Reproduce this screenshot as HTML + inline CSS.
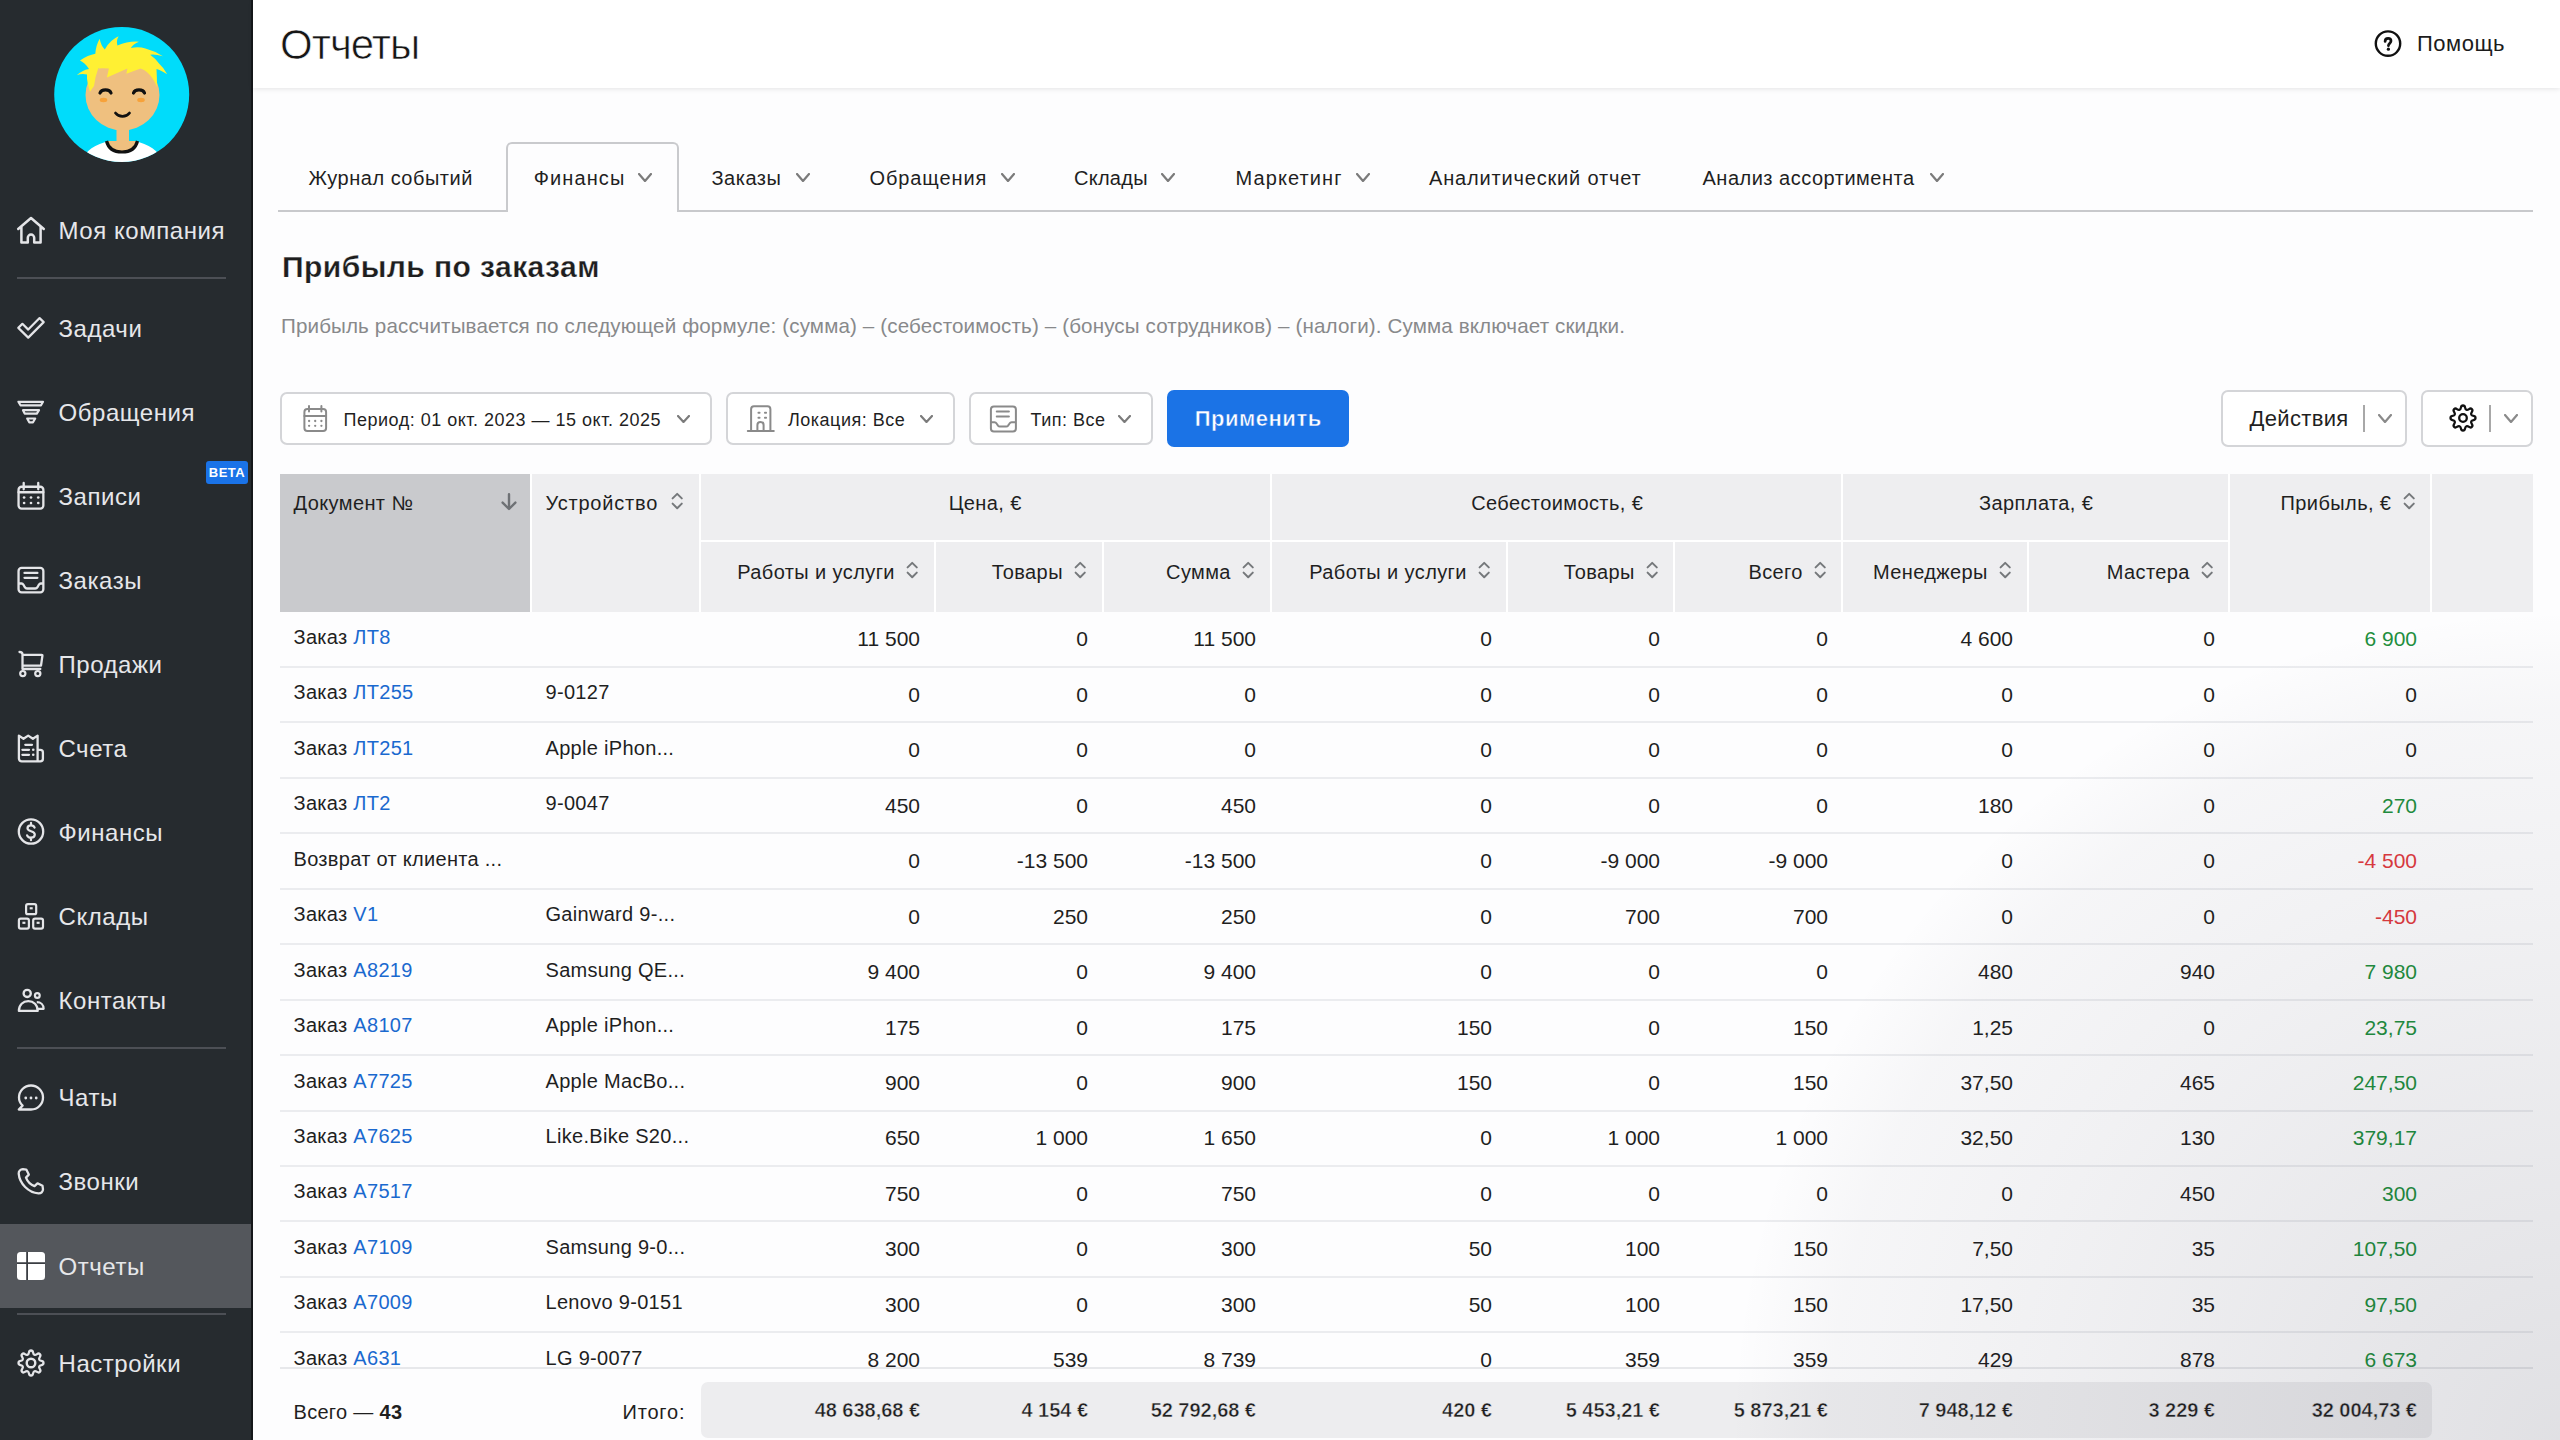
<!DOCTYPE html>
<html><head><meta charset="utf-8"><title>Отчеты</title>
<style>
html,body{margin:0;padding:0;}
body{width:2560px;height:1440px;overflow:hidden;position:relative;background:#fdfdfe;font-family:"Liberation Sans", sans-serif;}
.t{position:absolute;white-space:nowrap;}
#side{position:absolute;left:0;top:0;width:253px;height:1440px;background:#262b2f;border-right:0;}
#side:after{content:"";position:absolute;right:0;top:0;width:2px;height:1440px;background:#15171a;}
#hdr{position:absolute;left:253px;top:0;width:2307px;height:88px;background:#fff;box-shadow:0 1px 5px rgba(0,0,0,0.10);}
#vig{position:absolute;left:253px;top:0;width:2307px;height:1440px;pointer-events:none;background:radial-gradient(circle 830px at 2307px 1440px, rgba(30,30,50,0.13) 0%, rgba(30,30,50,0.055) 65%, rgba(30,30,50,0.03) 88%, rgba(30,30,50,0) 100%);}
</style></head><body>
<div id="side">
<svg style="position:absolute;left:40px;top:15px" width="160" height="160" viewBox="0 0 160 160">
<defs><clipPath id="av"><circle cx="81.7" cy="79.5" r="67.5"/></clipPath></defs>
<circle cx="81.7" cy="79.5" r="67.5" fill="#00dcfb"/>
<g clip-path="url(#av)">
<path d="M38 160 C40 140 50 130 70 126 L94 126 C114 130 124 140 126 160 Z" fill="#ffffff"/>
<rect x="76.5" y="108" width="12.5" height="22" fill="#efc07f"/>
<path d="M66 126 C68 134 74 137.5 82 137.5 C90 137.5 96 134 98 126 Z" fill="#efc07f"/>
<path d="M66.5 126 C68.5 134 74.5 137 82 137 C89.5 137 95.5 134 97.5 126" fill="none" stroke="#111" stroke-width="3.2"/>
<ellipse cx="82.5" cy="80" rx="37" ry="35.5" fill="#efc07f"/>
<path d="M49.9 76.7 C48 70 46.5 64 47 59.5 Q42 58 36.8 60.2 Q42 55 49 53.9 Q45 48 40 45.6 Q48 40 55.3 38.8 Q56 30 59.7 23.75 Q61 31 64.8 34.4 Q70 25 78.6 21.3 Q76 26 77.4 30.6 Q88 26 99 26.7 Q93 29 90.8 33 Q99 31.5 105.4 33.5 Q115 36 122.9 41.25 Q115 39 110.2 39.8 Q116 44 119 48.5 Q124 53 127.2 59.2 Q121 55 116.5 53.9 Q117 63 117 72 Q115 67 112.6 63.6 Q108 56 100.5 53.4 L86.4 58.75 L87.4 53.4 L66.9 62.6 L68.9 53.4 Q62 53 58.2 53.4 Q55 62 54 70.9 Z" fill="#fff033"/>
<path d="M60 78 C61.5 73.8 69.5 73.8 71 78" fill="none" stroke="#111" stroke-width="3.2" stroke-linecap="round"/>
<path d="M93.5 78 C95 73.8 103 73.8 104.5 78" fill="none" stroke="#111" stroke-width="3.2" stroke-linecap="round"/>
<ellipse cx="63.5" cy="85" rx="3.8" ry="2.2" fill="#f7a23a"/>
<ellipse cx="101" cy="85" rx="3.8" ry="2.2" fill="#f7a23a"/>
<path d="M75.5 98 C79 102.5 86 102.5 89.5 98" fill="none" stroke="#111" stroke-width="2.8" stroke-linecap="round"/>
</g>
</svg>
<svg style="position:absolute;left:17px;top:214px;overflow:visible" width="28" height="28" viewBox="0 0 28 28"><path d="M1.2 15 L14 4 L26.8 15 M4.4 12.2 V28.4 H10.8 V23.8 A3.2 3.2 0 0 1 17.2 23.8 V28.4 H23.6 V12.2" fill="none" stroke="#e4e5e8" stroke-width="2.5" stroke-linejoin="round" stroke-linecap="round"/></svg>
<div class="t sb" style="top:218.68px;font-size:24px;line-height:24px;color:#e6e7ea;font-weight:400;letter-spacing:0.55px;left:58.50px;">Моя компания</div>
<svg style="position:absolute;left:17px;top:314px;overflow:visible" width="28" height="28" viewBox="0 0 28 28"><path d="M1.3 13.9 L11.25 23.6 L26.7 8.1 L22.6 4.1 L11.25 15.6 L5.4 9.8 Z" fill="none" stroke="#e4e5e8" stroke-width="2.2" stroke-linejoin="round"/></svg>
<div class="t sb" style="top:316.68px;font-size:24px;line-height:24px;color:#e6e7ea;font-weight:400;letter-spacing:0.55px;left:58.50px;">Задачи</div>
<svg style="position:absolute;left:17px;top:398px;overflow:visible" width="28" height="28" viewBox="0 0 28 28"><path d="M1.4 3.8 H26 L24 7.3 H3.5 Z M6 12.2 H22 L19.8 15.6 H7.7 Z M10.2 20.5 H18.2 L16 24.3 H12.25 Z" fill="none" stroke="#e4e5e8" stroke-width="2.2" stroke-linejoin="round"/></svg>
<div class="t sb" style="top:400.68px;font-size:24px;line-height:24px;color:#e6e7ea;font-weight:400;letter-spacing:0.55px;left:58.50px;">Обращения</div>
<svg style="position:absolute;left:17px;top:482px;overflow:visible" width="28" height="28" viewBox="0 0 28 28"><rect x="1.55" y="4.75" width="24.8" height="21.85" rx="3" fill="none" stroke="#e4e5e8" stroke-width="2.3"/><path d="M1.55 10.25 H26.35 M6.7 1 V7.3 M21.25 1 V7.3" stroke="#e4e5e8" stroke-width="2.3" stroke-linecap="round"/><g fill="#e4e5e8"><circle cx="7.1" cy="15.5" r="1.35"/><circle cx="14" cy="15.5" r="1.35"/><circle cx="21.25" cy="15.5" r="1.35"/><circle cx="7.1" cy="21" r="1.35"/><circle cx="14" cy="21" r="1.35"/><circle cx="21.25" cy="21" r="1.35"/></g></svg>
<div class="t sb" style="top:484.68px;font-size:24px;line-height:24px;color:#e6e7ea;font-weight:400;letter-spacing:0.55px;left:58.50px;">Записи</div>
<svg style="position:absolute;left:17px;top:566px;overflow:visible" width="28" height="28" viewBox="0 0 28 28"><rect x="1.55" y="1.95" width="24.8" height="24.4" rx="3" fill="none" stroke="#e4e5e8" stroke-width="2.3"/><path d="M7.5 6.9 H20.4 M7.5 11.8 H20.4" stroke="#e4e5e8" stroke-width="2.3" stroke-linecap="round"/><path d="M1.55 17.5 H4.6 C5.5 17.5 6 18 6.5 18.8 L7.8 21.2 C8.3 22 8.9 22.5 10 22.5 H18.3 C19.4 22.5 20 22 20.5 21.2 L21.8 18.8 C22.3 18 22.8 17.5 23.7 17.5 H26.35" fill="none" stroke="#e4e5e8" stroke-width="2.3" stroke-linejoin="round"/></svg>
<div class="t sb" style="top:568.68px;font-size:24px;line-height:24px;color:#e6e7ea;font-weight:400;letter-spacing:0.55px;left:58.50px;">Заказы</div>
<svg style="position:absolute;left:17px;top:650px;overflow:visible" width="28" height="28" viewBox="0 0 28 28"><path d="M2.5 2 C4.3 2 5.5 2.8 5.5 4.6 V19 H23.3 M5.5 4.8 H24.6 C25.2 4.8 25.5 5.2 25.4 5.8 L24 15.7 H5.5" fill="none" stroke="#e4e5e8" stroke-width="2.3" stroke-linejoin="round" stroke-linecap="round"/><circle cx="5.8" cy="23.6" r="2.6" fill="none" stroke="#e4e5e8" stroke-width="2.2"/><circle cx="20.8" cy="23.6" r="2.6" fill="none" stroke="#e4e5e8" stroke-width="2.2"/></svg>
<div class="t sb" style="top:652.68px;font-size:24px;line-height:24px;color:#e6e7ea;font-weight:400;letter-spacing:0.55px;left:58.50px;">Продажи</div>
<svg style="position:absolute;left:17px;top:734px;overflow:visible" width="28" height="28" viewBox="0 0 28 28"><path d="M1.9 24.6 V1.6 L6.5 4.8 L11.2 1.6 L15.9 4.8 L20.6 1.6 V27.4 M20.6 15.8 H23.3 C24.8 15.8 25.9 16.9 25.9 18.4 V24.8 C25.9 26.3 24.8 27.4 23.3 27.4 H4.7 C3.2 27.4 1.9 26.2 1.9 24.6" fill="none" stroke="#e4e5e8" stroke-width="2.3" stroke-linejoin="round"/><path d="M8.3 10.8 H15 M5.4 15.8 H12 M5.4 20.8 H12" stroke="#e4e5e8" stroke-width="2.3" stroke-linecap="round"/><circle cx="16.25" cy="15.8" r="1.3" fill="#e4e5e8"/><circle cx="16.25" cy="20.8" r="1.3" fill="#e4e5e8"/></svg>
<div class="t sb" style="top:736.68px;font-size:24px;line-height:24px;color:#e6e7ea;font-weight:400;letter-spacing:0.55px;left:58.50px;">Счета</div>
<svg style="position:absolute;left:17px;top:818px;overflow:visible" width="28" height="28" viewBox="0 0 28 28"><circle cx="14" cy="13.5" r="12.2" fill="none" stroke="#e4e5e8" stroke-width="2.3"/><path d="M17.6 9.6 C17.1 8 15.7 7.3 14 7.3 C12 7.3 10.5 8.4 10.5 10.2 C10.5 14 17.8 12.6 17.8 16.6 C17.8 18.6 16 19.7 14 19.7 C12 19.7 10.6 18.7 10.1 17.3 M14 4.8 V7.3 M14 19.7 V22.2" fill="none" stroke="#e4e5e8" stroke-width="2.2" stroke-linecap="round"/></svg>
<div class="t sb" style="top:820.68px;font-size:24px;line-height:24px;color:#e6e7ea;font-weight:400;letter-spacing:0.55px;left:58.50px;">Финансы</div>
<svg style="position:absolute;left:17px;top:902px;overflow:visible" width="28" height="28" viewBox="0 0 28 28"><rect x="9.1" y="2.1" width="10.1" height="10.1" rx="1.8" fill="none" stroke="#e4e5e8" stroke-width="2.2"/><rect x="1.9" y="16.6" width="10" height="10" rx="1.8" fill="none" stroke="#e4e5e8" stroke-width="2.2"/><rect x="16.2" y="16.6" width="9.8" height="10" rx="1.8" fill="none" stroke="#e4e5e8" stroke-width="2.2"/><rect x="12.7" y="5.2" width="3" height="2.2" fill="#e4e5e8"/><rect x="5.4" y="19.7" width="3" height="2.2" fill="#e4e5e8"/><rect x="19.6" y="19.7" width="3" height="2.2" fill="#e4e5e8"/></svg>
<div class="t sb" style="top:904.68px;font-size:24px;line-height:24px;color:#e6e7ea;font-weight:400;letter-spacing:0.55px;left:58.50px;">Склады</div>
<svg style="position:absolute;left:17px;top:986px;overflow:visible" width="28" height="28" viewBox="0 0 28 28"><circle cx="10.2" cy="7.4" r="3.6" fill="none" stroke="#e4e5e8" stroke-width="2.3"/><circle cx="20.3" cy="9.5" r="2.4" fill="none" stroke="#e4e5e8" stroke-width="2.2"/><path d="M1.9 24.9 C1.9 18.8 6 15.2 11.3 15.2 C16.6 15.2 20.7 18.8 20.7 24.9 Z M19.8 16.2 C23.8 16.2 26.6 18.8 26.6 22.8 H21.2" fill="none" stroke="#e4e5e8" stroke-width="2.3" stroke-linejoin="round"/></svg>
<div class="t sb" style="top:988.68px;font-size:24px;line-height:24px;color:#e6e7ea;font-weight:400;letter-spacing:0.55px;left:58.50px;">Контакты</div>
<svg style="position:absolute;left:17px;top:1083px;overflow:visible" width="28" height="28" viewBox="0 0 28 28"><path d="M14 2.5 C20.6 2.5 26 7.9 26 14.5 C26 21.1 20.6 26.5 14 26.5 H1.8 L5.6 22.6 C3.3 20.4 2 17.6 2 14.5 C2 7.9 7.4 2.5 14 2.5 Z" fill="none" stroke="#e4e5e8" stroke-width="2.3" stroke-linejoin="round"/><circle cx="8.75" cy="15" r="1.4" fill="#e4e5e8"/><circle cx="14" cy="15" r="1.4" fill="#e4e5e8"/><circle cx="19.2" cy="15" r="1.4" fill="#e4e5e8"/></svg>
<div class="t sb" style="top:1085.68px;font-size:24px;line-height:24px;color:#e6e7ea;font-weight:400;letter-spacing:0.55px;left:58.50px;">Чаты</div>
<svg style="position:absolute;left:17px;top:1167px;overflow:visible" width="28" height="28" viewBox="0 0 28 28"><path d="M5.8 2.2 L9.3 2.6 L11.8 7.6 L9 10.6 C10.5 14.6 13.5 17.6 17.5 19.1 L20.5 16.3 L25.5 18.8 L26 22.3 C26 24.6 24 26.6 21.5 26.4 C11.5 25.6 2.5 16.6 1.7 6.6 C1.5 4.1 3.5 2.2 5.8 2.2 Z" fill="none" stroke="#e4e5e8" stroke-width="2.3" stroke-linejoin="round"/></svg>
<div class="t sb" style="top:1169.68px;font-size:24px;line-height:24px;color:#e6e7ea;font-weight:400;letter-spacing:0.55px;left:58.50px;">Звонки</div>
<div style="position:absolute;left:0;top:1224px;width:252px;height:84px;background:#54575c"></div>
<svg style="position:absolute;left:17px;top:1252px;overflow:visible" width="28" height="28" viewBox="0 0 28 28"><rect x="0" y="0" width="28" height="28" rx="3.5" fill="#ffffff"/><path d="M10.1 0 V28 M0 11.1 H28" stroke="#3b3e43" stroke-width="1.8"/></svg>
<div class="t sb" style="top:1254.68px;font-size:24px;line-height:24px;color:#e6e7ea;font-weight:400;letter-spacing:0.55px;left:58.50px;">Отчеты</div>
<svg style="position:absolute;left:17px;top:1349.4px;overflow:visible" width="28" height="28" viewBox="0 0 28 28"><path d="M11.99 3.41 Q12.32 1.51 14.00 1.51 Q15.68 1.51 16.01 3.41 Q16.34 5.31 17.42 5.75 Q18.49 6.20 20.07 5.09 Q21.64 3.98 22.83 5.17 Q24.02 6.36 22.91 7.93 Q21.80 9.51 22.25 10.58 Q22.69 11.66 24.59 11.99 Q26.49 12.32 26.49 14.00 Q26.49 15.68 24.59 16.01 Q22.69 16.34 22.25 17.42 Q21.80 18.49 22.91 20.07 Q24.02 21.64 22.83 22.83 Q21.64 24.02 20.07 22.91 Q18.49 21.80 17.42 22.25 Q16.34 22.69 16.01 24.59 Q15.68 26.49 14.00 26.49 Q12.32 26.49 11.99 24.59 Q11.66 22.69 10.58 22.25 Q9.51 21.80 7.93 22.91 Q6.36 24.02 5.17 22.83 Q3.98 21.64 5.09 20.07 Q6.20 18.49 5.75 17.42 Q5.31 16.34 3.41 16.01 Q1.51 15.68 1.51 14.00 Q1.51 12.32 3.41 11.99 Q5.31 11.66 5.75 10.58 Q6.20 9.51 5.09 7.93 Q3.98 6.36 5.17 5.17 Q6.36 3.98 7.93 5.09 Q9.51 6.20 10.58 5.75 Q11.66 5.31 11.99 3.41 Z" fill="none" stroke="#e4e5e8" stroke-width="2.3" stroke-linejoin="round"/><circle cx="14" cy="14" r="4.3" fill="none" stroke="#e4e5e8" stroke-width="2.4"/></svg>
<div class="t sb" style="top:1351.68px;font-size:24px;line-height:24px;color:#e6e7ea;font-weight:400;letter-spacing:0.55px;left:58.50px;">Настройки</div>
<div style="position:absolute;left:17px;top:277px;width:209px;height:2px;background:#4c4f55"></div>
<div style="position:absolute;left:17px;top:1047px;width:209px;height:2px;background:#4c4f55"></div>
<div style="position:absolute;left:17px;top:1313px;width:209px;height:2px;background:#4c4f55"></div>
<div style="position:absolute;left:206px;top:461px;width:42px;height:23px;background:#1a73e8;border-radius:3px;color:#fff;font-size:13px;font-weight:700;line-height:23px;text-align:center;letter-spacing:0.5px">BETA</div>
</div>
<div id="hdr"></div>
<div class="t thin" style="top:23.65px;font-size:42px;line-height:42px;color:#161616;font-weight:400;letter-spacing:-1.0px;left:280.00px;-webkit-text-stroke:0.7px #fff;">Отчеты</div>
<svg style="position:absolute;left:2374px;top:30px" width="28" height="28" viewBox="0 0 28 28"><circle cx="14" cy="13.6" r="12.2" fill="none" stroke="#111" stroke-width="2.4"/><path d="M11.1 11.4 C11.1 9.6 12.4 8.4 14.1 8.4 C15.8 8.4 17 9.5 17 11.1 C17 13 14.7 13.4 14.4 15.6" fill="none" stroke="#111" stroke-width="2.7" stroke-linecap="round"/><circle cx="14.4" cy="19.2" r="1.6" fill="#111"/></svg>
<div class="t help" style="top:33.38px;font-size:22px;line-height:22px;color:#1c1c1c;font-weight:400;letter-spacing:0.5px;left:2417.00px;">Помощь</div>
<div style="position:absolute;left:278px;top:210px;width:2255px;height:2px;background:#c8c9cc"></div>
<div style="position:absolute;left:506px;top:142px;width:169px;height:68px;border:2px solid #c9cacd;border-bottom:none;border-radius:6px 6px 0 0;background:#fdfdfe"></div>
<div class="t tab" style="top:167.67px;font-size:20px;line-height:20px;color:#1f1f1f;font-weight:400;letter-spacing:0.5px;left:308.60px;">Журнал событий</div>
<div class="t tab" style="top:167.67px;font-size:20px;line-height:20px;color:#1f1f1f;font-weight:400;letter-spacing:1.1px;left:533.70px;">Финансы</div>
<svg style="position:absolute;left:638px;top:173px" width="14" height="9" viewBox="0 0 14 9"><path d="M1 1 L7.0 8 L13 1" fill="none" stroke="#7b7b7b" stroke-width="2.2" stroke-linecap="round" stroke-linejoin="round"/></svg>
<div class="t tab" style="top:167.67px;font-size:20px;line-height:20px;color:#1f1f1f;font-weight:400;letter-spacing:0.5px;left:711.50px;">Заказы</div>
<svg style="position:absolute;left:796px;top:173px" width="14" height="9" viewBox="0 0 14 9"><path d="M1 1 L7.0 8 L13 1" fill="none" stroke="#7b7b7b" stroke-width="2.2" stroke-linecap="round" stroke-linejoin="round"/></svg>
<div class="t tab" style="top:167.67px;font-size:20px;line-height:20px;color:#1f1f1f;font-weight:400;letter-spacing:0.9px;left:869.50px;">Обращения</div>
<svg style="position:absolute;left:1000.5px;top:173px" width="14" height="9" viewBox="0 0 14 9"><path d="M1 1 L7.0 8 L13 1" fill="none" stroke="#7b7b7b" stroke-width="2.2" stroke-linecap="round" stroke-linejoin="round"/></svg>
<div class="t tab" style="top:167.67px;font-size:20px;line-height:20px;color:#1f1f1f;font-weight:400;letter-spacing:0.25px;left:1074.00px;">Склады</div>
<svg style="position:absolute;left:1161px;top:173px" width="14" height="9" viewBox="0 0 14 9"><path d="M1 1 L7.0 8 L13 1" fill="none" stroke="#7b7b7b" stroke-width="2.2" stroke-linecap="round" stroke-linejoin="round"/></svg>
<div class="t tab" style="top:167.67px;font-size:20px;line-height:20px;color:#1f1f1f;font-weight:400;letter-spacing:1.1px;left:1235.50px;">Маркетинг</div>
<svg style="position:absolute;left:1356px;top:173px" width="14" height="9" viewBox="0 0 14 9"><path d="M1 1 L7.0 8 L13 1" fill="none" stroke="#7b7b7b" stroke-width="2.2" stroke-linecap="round" stroke-linejoin="round"/></svg>
<div class="t tab" style="top:167.67px;font-size:20px;line-height:20px;color:#1f1f1f;font-weight:400;letter-spacing:0.83px;left:1429.00px;">Аналитический отчет</div>
<div class="t tab" style="top:167.67px;font-size:20px;line-height:20px;color:#1f1f1f;font-weight:400;letter-spacing:0.5px;left:1702.50px;">Анализ ассортимента</div>
<svg style="position:absolute;left:1929.5px;top:173px" width="14" height="9" viewBox="0 0 14 9"><path d="M1 1 L7.0 8 L13 1" fill="none" stroke="#7b7b7b" stroke-width="2.2" stroke-linecap="round" stroke-linejoin="round"/></svg>
<div class="t h2" style="top:251.60px;font-size:30px;line-height:30px;color:#1e1e1e;font-weight:700;letter-spacing:0.45px;left:282.00px;-webkit-text-stroke:0.25px #fdfdfe;">Прибыль по заказам</div>
<div class="t desc" style="top:315.56px;font-size:20.6px;line-height:20.6px;color:#88898b;font-weight:400;letter-spacing:0.125px;left:281.00px;">Прибыль рассчитывается по следующей формуле: (сумма) – (себестоимость) – (бонусы сотрудников) – (налоги). Сумма включает скидки.</div>
<div style="position:absolute;left:280px;top:392px;width:432px;height:53px;box-sizing:border-box;border:2px solid #d4d5d8;border-radius:7px;background:#fff;"></div>
<svg style="position:absolute;left:303px;top:405px;overflow:visible" width="25" height="27" viewBox="0 0 25 27"><rect x="1.4" y="4" width="21.7" height="21.9" rx="3" fill="none" stroke="#8a8a8a" stroke-width="2"/><path d="M1.4 11.1 H23.1 M6 1 V6.6 M18.4 1 V6.6" stroke="#8a8a8a" stroke-width="2" stroke-linecap="round"/><g fill="#8a8a8a"><circle cx="6.1" cy="16" r="1.15"/><circle cx="12.2" cy="16" r="1.15"/><circle cx="18.4" cy="16" r="1.15"/><circle cx="6.1" cy="20.8" r="1.15"/><circle cx="12.2" cy="20.8" r="1.15"/><circle cx="18.4" cy="20.8" r="1.15"/></g></svg>
<div class="t flt" style="top:410.76px;font-size:18px;line-height:18px;color:#1f1f1f;font-weight:400;letter-spacing:0.5px;left:343.50px;">Период: 01 окт. 2023 — 15 окт. 2025</div>
<svg style="position:absolute;left:677px;top:415px" width="13" height="8" viewBox="0 0 13 8"><path d="M1 1 L6.5 7 L12 1" fill="none" stroke="#7b7b7b" stroke-width="2.2" stroke-linecap="round" stroke-linejoin="round"/></svg>
<div style="position:absolute;left:726px;top:392px;width:229px;height:53px;box-sizing:border-box;border:2px solid #d4d5d8;border-radius:7px;background:#fff;"></div>
<svg style="position:absolute;left:747px;top:405px;overflow:visible" width="27" height="27" viewBox="0 0 27 27"><path d="M4.1 26 V4.2 Q4.1 1.3 7 1.3 H20.5 Q23.4 1.3 23.4 4.2 V26 M0.8 26 H26.8 M10.4 26 V20 A3.1 3.1 0 0 1 16.6 20 V26" fill="none" stroke="#8a8a8a" stroke-width="2" stroke-linejoin="round" stroke-linecap="round"/><g fill="#8a8a8a"><rect x="10.5" y="6.8" width="3" height="2" rx="0.8"/><rect x="17" y="6.8" width="3" height="2" rx="0.8"/><rect x="10.5" y="11.8" width="3" height="2" rx="0.8"/><rect x="17" y="11.8" width="3" height="2" rx="0.8"/></g></svg>
<div class="t flt" style="top:410.76px;font-size:18px;line-height:18px;color:#1f1f1f;font-weight:400;letter-spacing:0.5px;left:788.00px;">Локация: Все</div>
<svg style="position:absolute;left:920px;top:415px" width="13" height="8" viewBox="0 0 13 8"><path d="M1 1 L6.5 7 L12 1" fill="none" stroke="#7b7b7b" stroke-width="2.2" stroke-linecap="round" stroke-linejoin="round"/></svg>
<div style="position:absolute;left:969px;top:392px;width:184px;height:53px;box-sizing:border-box;border:2px solid #d4d5d8;border-radius:7px;background:#fff;"></div>
<svg style="position:absolute;left:989px;top:405px;overflow:visible" width="27" height="27" viewBox="0 0 27 27"><rect x="1.9" y="1.4" width="25" height="25.2" rx="3" fill="none" stroke="#8a8a8a" stroke-width="2"/><path d="M7.75 6.5 H19.9 M7.75 11.5 H19.9" stroke="#8a8a8a" stroke-width="2" stroke-linecap="round"/><path d="M1.9 17.25 H5.5 C6.5 17.25 7.1 17.7 7.6 18.5 L9 20.6 C9.5 21.3 10.2 21.6 11 21.6 H17.2 C18 21.6 18.6 21.3 19.1 20.6 L20.5 18.5 C21 17.7 21.6 17.25 22.6 17.25 H26.9" fill="none" stroke="#8a8a8a" stroke-width="2" stroke-linejoin="round"/></svg>
<div class="t flt" style="top:410.76px;font-size:18px;line-height:18px;color:#1f1f1f;font-weight:400;letter-spacing:0.5px;left:1030.50px;">Тип: Все</div>
<svg style="position:absolute;left:1118px;top:415px" width="13" height="8" viewBox="0 0 13 8"><path d="M1 1 L6.5 7 L12 1" fill="none" stroke="#7b7b7b" stroke-width="2.2" stroke-linecap="round" stroke-linejoin="round"/></svg>
<div style="position:absolute;left:1167px;top:390px;width:182px;height:57px;background:#1b73e6;border-radius:7px"></div>
<div class="t btn" style="top:407.98px;font-size:22px;line-height:22px;color:#fff;font-weight:700;letter-spacing:0.5px;left:658.25px;width:1200px;text-align:center;-webkit-text-stroke:0.5px #1b73e6;">Применить</div>
<div style="position:absolute;left:2221px;top:390px;width:186px;height:57px;box-sizing:border-box;border:2px solid #d4d5d8;border-radius:7px;background:#fff;"></div>
<div class="t act" style="top:408.38px;font-size:22px;line-height:22px;color:#1f1f1f;font-weight:400;letter-spacing:0.33px;left:2249.50px;">Действия</div>
<div style="position:absolute;left:2363px;top:405px;width:2px;height:27px;background:#a8a8a8"></div>
<svg style="position:absolute;left:2378px;top:414px" width="14" height="9" viewBox="0 0 14 9"><path d="M1 1 L7.0 8 L13 1" fill="none" stroke="#8a8a8a" stroke-width="2.2" stroke-linecap="round" stroke-linejoin="round"/></svg>
<div style="position:absolute;left:2421px;top:390px;width:112px;height:57px;box-sizing:border-box;border:2px solid #d4d5d8;border-radius:7px;background:#fff;"></div>
<svg style="position:absolute;left:2448.6px;top:404.3px;overflow:visible" width="28" height="28" viewBox="0 0 28 28"><path d="M11.99 3.41 Q12.32 1.51 14.00 1.51 Q15.68 1.51 16.01 3.41 Q16.34 5.31 17.42 5.75 Q18.49 6.20 20.07 5.09 Q21.64 3.98 22.83 5.17 Q24.02 6.36 22.91 7.93 Q21.80 9.51 22.25 10.58 Q22.69 11.66 24.59 11.99 Q26.49 12.32 26.49 14.00 Q26.49 15.68 24.59 16.01 Q22.69 16.34 22.25 17.42 Q21.80 18.49 22.91 20.07 Q24.02 21.64 22.83 22.83 Q21.64 24.02 20.07 22.91 Q18.49 21.80 17.42 22.25 Q16.34 22.69 16.01 24.59 Q15.68 26.49 14.00 26.49 Q12.32 26.49 11.99 24.59 Q11.66 22.69 10.58 22.25 Q9.51 21.80 7.93 22.91 Q6.36 24.02 5.17 22.83 Q3.98 21.64 5.09 20.07 Q6.20 18.49 5.75 17.42 Q5.31 16.34 3.41 16.01 Q1.51 15.68 1.51 14.00 Q1.51 12.32 3.41 11.99 Q5.31 11.66 5.75 10.58 Q6.20 9.51 5.09 7.93 Q3.98 6.36 5.17 5.17 Q6.36 3.98 7.93 5.09 Q9.51 6.20 10.58 5.75 Q11.66 5.31 11.99 3.41 Z" fill="none" stroke="#111" stroke-width="2.3" stroke-linejoin="round"/><circle cx="14" cy="14" r="3.8" fill="none" stroke="#111" stroke-width="2.3"/></svg>
<div style="position:absolute;left:2489px;top:405px;width:2px;height:27px;background:#a8a8a8"></div>
<svg style="position:absolute;left:2504px;top:414px" width="14" height="9" viewBox="0 0 14 9"><path d="M1 1 L7.0 8 L13 1" fill="none" stroke="#8a8a8a" stroke-width="2.2" stroke-linecap="round" stroke-linejoin="round"/></svg>
<div style="position:absolute;left:280px;top:474px;width:2252.5px;height:137.5px;background:#eeeef0;"></div>
<div style="position:absolute;left:280px;top:474px;width:251px;height:137.5px;background:#c9cacd;"></div>
<div style="position:absolute;left:530px;top:474px;width:2px;height:137.5px;background:#fff;"></div>
<div style="position:absolute;left:698.5px;top:474px;width:2px;height:137.5px;background:#fff;"></div>
<div style="position:absolute;left:934px;top:541px;width:2px;height:70.5px;background:#fff;"></div>
<div style="position:absolute;left:1101.5px;top:541px;width:2px;height:70.5px;background:#fff;"></div>
<div style="position:absolute;left:1270px;top:474px;width:2px;height:137.5px;background:#fff;"></div>
<div style="position:absolute;left:1505.5px;top:541px;width:2px;height:70.5px;background:#fff;"></div>
<div style="position:absolute;left:1673.3px;top:541px;width:2px;height:70.5px;background:#fff;"></div>
<div style="position:absolute;left:1841.4px;top:474px;width:2px;height:137.5px;background:#fff;"></div>
<div style="position:absolute;left:2026.5px;top:541px;width:2px;height:70.5px;background:#fff;"></div>
<div style="position:absolute;left:2228.25px;top:474px;width:2px;height:137.5px;background:#fff;"></div>
<div style="position:absolute;left:2430.25px;top:474px;width:2px;height:137.5px;background:#fff;"></div>
<div style="position:absolute;left:699.5px;top:540px;width:571.5px;height:2px;background:#fff;"></div>
<div style="position:absolute;left:1271px;top:540px;width:571.4000000000001px;height:2px;background:#fff;"></div>
<div style="position:absolute;left:1842.4px;top:540px;width:386.8499999999999px;height:2px;background:#fff;"></div>
<div class="t th" style="top:492.57px;font-size:20px;line-height:20px;color:#1f1f1f;font-weight:400;letter-spacing:0.4px;left:293.50px;">Документ №</div>
<svg style="position:absolute;left:500.5px;top:492.5px;overflow:visible" width="17" height="20" viewBox="0 0 17 20"><path d="M8 1.2 V15.6 M1.6 9.6 L8 16 L14.4 9.6" fill="none" stroke="#6e7175" stroke-width="2.4" stroke-linecap="round" stroke-linejoin="round"/></svg>
<div class="t th" style="top:492.57px;font-size:20px;line-height:20px;color:#1f1f1f;font-weight:400;letter-spacing:0.8px;left:545.50px;">Устройство</div>
<svg style="position:absolute;left:670.5px;top:493px;overflow:visible" width="12" height="17" viewBox="0 0 12 17"><path d="M1.6 5.4 L6.2 0.9 L10.8 5.4 M1.6 10.6 L6.2 15.2 L10.8 10.6" fill="none" stroke="#75787b" stroke-width="2" stroke-linecap="round" stroke-linejoin="round"/></svg>
<div class="t th" style="top:492.57px;font-size:20px;line-height:20px;color:#1f1f1f;font-weight:400;letter-spacing:0.4px;left:385.20px;width:1200px;text-align:center;">Цена, €</div>
<div class="t th" style="top:492.57px;font-size:20px;line-height:20px;color:#1f1f1f;font-weight:400;letter-spacing:0.4px;left:957.20px;width:1200px;text-align:center;">Себестоимость, €</div>
<div class="t th" style="top:492.57px;font-size:20px;line-height:20px;color:#1f1f1f;font-weight:400;letter-spacing:0.4px;left:1436.20px;width:1200px;text-align:center;">Зарплата, €</div>
<div class="t th" style="top:492.57px;font-size:20px;line-height:20px;color:#1f1f1f;font-weight:400;letter-spacing:0.4px;left:1191.40px;width:1200px;text-align:right;">Прибыль, €</div>
<svg style="position:absolute;left:2402.5px;top:492.8px;overflow:visible" width="12" height="17" viewBox="0 0 12 17"><path d="M1.6 5.4 L6.2 0.9 L10.8 5.4 M1.6 10.6 L6.2 15.2 L10.8 10.6" fill="none" stroke="#75787b" stroke-width="2" stroke-linecap="round" stroke-linejoin="round"/></svg>
<div class="t th" style="top:561.77px;font-size:20px;line-height:20px;color:#1f1f1f;font-weight:400;letter-spacing:0.4px;left:-305.10px;width:1200px;text-align:right;">Работы и услуги</div>
<svg style="position:absolute;left:906px;top:562px;overflow:visible" width="12" height="17" viewBox="0 0 12 17"><path d="M1.6 5.4 L6.2 0.9 L10.8 5.4 M1.6 10.6 L6.2 15.2 L10.8 10.6" fill="none" stroke="#75787b" stroke-width="2" stroke-linecap="round" stroke-linejoin="round"/></svg>
<div class="t th" style="top:561.77px;font-size:20px;line-height:20px;color:#1f1f1f;font-weight:400;letter-spacing:0.4px;left:-137.10px;width:1200px;text-align:right;">Товары</div>
<svg style="position:absolute;left:1074px;top:562px;overflow:visible" width="12" height="17" viewBox="0 0 12 17"><path d="M1.6 5.4 L6.2 0.9 L10.8 5.4 M1.6 10.6 L6.2 15.2 L10.8 10.6" fill="none" stroke="#75787b" stroke-width="2" stroke-linecap="round" stroke-linejoin="round"/></svg>
<div class="t th" style="top:561.77px;font-size:20px;line-height:20px;color:#1f1f1f;font-weight:400;letter-spacing:0.4px;left:30.90px;width:1200px;text-align:right;">Сумма</div>
<svg style="position:absolute;left:1242px;top:562px;overflow:visible" width="12" height="17" viewBox="0 0 12 17"><path d="M1.6 5.4 L6.2 0.9 L10.8 5.4 M1.6 10.6 L6.2 15.2 L10.8 10.6" fill="none" stroke="#75787b" stroke-width="2" stroke-linecap="round" stroke-linejoin="round"/></svg>
<div class="t th" style="top:561.77px;font-size:20px;line-height:20px;color:#1f1f1f;font-weight:400;letter-spacing:0.4px;left:266.90px;width:1200px;text-align:right;">Работы и услуги</div>
<svg style="position:absolute;left:1478px;top:562px;overflow:visible" width="12" height="17" viewBox="0 0 12 17"><path d="M1.6 5.4 L6.2 0.9 L10.8 5.4 M1.6 10.6 L6.2 15.2 L10.8 10.6" fill="none" stroke="#75787b" stroke-width="2" stroke-linecap="round" stroke-linejoin="round"/></svg>
<div class="t th" style="top:561.77px;font-size:20px;line-height:20px;color:#1f1f1f;font-weight:400;letter-spacing:0.4px;left:434.90px;width:1200px;text-align:right;">Товары</div>
<svg style="position:absolute;left:1646px;top:562px;overflow:visible" width="12" height="17" viewBox="0 0 12 17"><path d="M1.6 5.4 L6.2 0.9 L10.8 5.4 M1.6 10.6 L6.2 15.2 L10.8 10.6" fill="none" stroke="#75787b" stroke-width="2" stroke-linecap="round" stroke-linejoin="round"/></svg>
<div class="t th" style="top:561.77px;font-size:20px;line-height:20px;color:#1f1f1f;font-weight:400;letter-spacing:0.4px;left:602.90px;width:1200px;text-align:right;">Всего</div>
<svg style="position:absolute;left:1814px;top:562px;overflow:visible" width="12" height="17" viewBox="0 0 12 17"><path d="M1.6 5.4 L6.2 0.9 L10.8 5.4 M1.6 10.6 L6.2 15.2 L10.8 10.6" fill="none" stroke="#75787b" stroke-width="2" stroke-linecap="round" stroke-linejoin="round"/></svg>
<div class="t th" style="top:561.77px;font-size:20px;line-height:20px;color:#1f1f1f;font-weight:400;letter-spacing:0.4px;left:787.90px;width:1200px;text-align:right;">Менеджеры</div>
<svg style="position:absolute;left:1999px;top:562px;overflow:visible" width="12" height="17" viewBox="0 0 12 17"><path d="M1.6 5.4 L6.2 0.9 L10.8 5.4 M1.6 10.6 L6.2 15.2 L10.8 10.6" fill="none" stroke="#75787b" stroke-width="2" stroke-linecap="round" stroke-linejoin="round"/></svg>
<div class="t th" style="top:561.77px;font-size:20px;line-height:20px;color:#1f1f1f;font-weight:400;letter-spacing:0.4px;left:989.90px;width:1200px;text-align:right;">Мастера</div>
<svg style="position:absolute;left:2201px;top:562px;overflow:visible" width="12" height="17" viewBox="0 0 12 17"><path d="M1.6 5.4 L6.2 0.9 L10.8 5.4 M1.6 10.6 L6.2 15.2 L10.8 10.6" fill="none" stroke="#75787b" stroke-width="2" stroke-linecap="round" stroke-linejoin="round"/></svg>
<div class="t td" style="top:626.97px;font-size:20px;line-height:20px;color:#1f1f1f;font-weight:400;letter-spacing:0.3px;left:293.50px;">Заказ <span style="color:#1a69cf">ЛТ8</span></div>
<div class="t num" style="top:628.42px;font-size:21px;line-height:21px;color:#1f1f1f;font-weight:400;left:-280.00px;width:1200px;text-align:right;">11 500</div>
<div class="t num" style="top:628.42px;font-size:21px;line-height:21px;color:#1f1f1f;font-weight:400;left:-112.00px;width:1200px;text-align:right;">0</div>
<div class="t num" style="top:628.42px;font-size:21px;line-height:21px;color:#1f1f1f;font-weight:400;left:56.00px;width:1200px;text-align:right;">11 500</div>
<div class="t num" style="top:628.42px;font-size:21px;line-height:21px;color:#1f1f1f;font-weight:400;left:292.00px;width:1200px;text-align:right;">0</div>
<div class="t num" style="top:628.42px;font-size:21px;line-height:21px;color:#1f1f1f;font-weight:400;left:460.00px;width:1200px;text-align:right;">0</div>
<div class="t num" style="top:628.42px;font-size:21px;line-height:21px;color:#1f1f1f;font-weight:400;left:628.00px;width:1200px;text-align:right;">0</div>
<div class="t num" style="top:628.42px;font-size:21px;line-height:21px;color:#1f1f1f;font-weight:400;left:813.00px;width:1200px;text-align:right;">4 600</div>
<div class="t num" style="top:628.42px;font-size:21px;line-height:21px;color:#1f1f1f;font-weight:400;left:1015.00px;width:1200px;text-align:right;">0</div>
<div class="t num" style="top:628.42px;font-size:21px;line-height:21px;color:#1f8f3e;font-weight:400;left:1217.00px;width:1200px;text-align:right;">6 900</div>
<div style="position:absolute;left:280px;top:665.95px;width:2252.5px;height:2px;background:#ebecef;"></div>
<div class="t td" style="top:682.42px;font-size:20px;line-height:20px;color:#1f1f1f;font-weight:400;letter-spacing:0.3px;left:293.50px;">Заказ <span style="color:#1a69cf">ЛТ255</span></div>
<div class="t td" style="top:682.42px;font-size:20px;line-height:20px;color:#1f1f1f;font-weight:400;letter-spacing:0.3px;left:545.50px;">9-0127</div>
<div class="t num" style="top:683.87px;font-size:21px;line-height:21px;color:#1f1f1f;font-weight:400;left:-280.00px;width:1200px;text-align:right;">0</div>
<div class="t num" style="top:683.87px;font-size:21px;line-height:21px;color:#1f1f1f;font-weight:400;left:-112.00px;width:1200px;text-align:right;">0</div>
<div class="t num" style="top:683.87px;font-size:21px;line-height:21px;color:#1f1f1f;font-weight:400;left:56.00px;width:1200px;text-align:right;">0</div>
<div class="t num" style="top:683.87px;font-size:21px;line-height:21px;color:#1f1f1f;font-weight:400;left:292.00px;width:1200px;text-align:right;">0</div>
<div class="t num" style="top:683.87px;font-size:21px;line-height:21px;color:#1f1f1f;font-weight:400;left:460.00px;width:1200px;text-align:right;">0</div>
<div class="t num" style="top:683.87px;font-size:21px;line-height:21px;color:#1f1f1f;font-weight:400;left:628.00px;width:1200px;text-align:right;">0</div>
<div class="t num" style="top:683.87px;font-size:21px;line-height:21px;color:#1f1f1f;font-weight:400;left:813.00px;width:1200px;text-align:right;">0</div>
<div class="t num" style="top:683.87px;font-size:21px;line-height:21px;color:#1f1f1f;font-weight:400;left:1015.00px;width:1200px;text-align:right;">0</div>
<div class="t num" style="top:683.87px;font-size:21px;line-height:21px;color:#1f1f1f;font-weight:400;left:1217.00px;width:1200px;text-align:right;">0</div>
<div style="position:absolute;left:280px;top:721.4px;width:2252.5px;height:2px;background:#ebecef;"></div>
<div class="t td" style="top:737.87px;font-size:20px;line-height:20px;color:#1f1f1f;font-weight:400;letter-spacing:0.3px;left:293.50px;">Заказ <span style="color:#1a69cf">ЛТ251</span></div>
<div class="t td" style="top:737.87px;font-size:20px;line-height:20px;color:#1f1f1f;font-weight:400;letter-spacing:0.3px;left:545.50px;">Apple iPhon...</div>
<div class="t num" style="top:739.32px;font-size:21px;line-height:21px;color:#1f1f1f;font-weight:400;left:-280.00px;width:1200px;text-align:right;">0</div>
<div class="t num" style="top:739.32px;font-size:21px;line-height:21px;color:#1f1f1f;font-weight:400;left:-112.00px;width:1200px;text-align:right;">0</div>
<div class="t num" style="top:739.32px;font-size:21px;line-height:21px;color:#1f1f1f;font-weight:400;left:56.00px;width:1200px;text-align:right;">0</div>
<div class="t num" style="top:739.32px;font-size:21px;line-height:21px;color:#1f1f1f;font-weight:400;left:292.00px;width:1200px;text-align:right;">0</div>
<div class="t num" style="top:739.32px;font-size:21px;line-height:21px;color:#1f1f1f;font-weight:400;left:460.00px;width:1200px;text-align:right;">0</div>
<div class="t num" style="top:739.32px;font-size:21px;line-height:21px;color:#1f1f1f;font-weight:400;left:628.00px;width:1200px;text-align:right;">0</div>
<div class="t num" style="top:739.32px;font-size:21px;line-height:21px;color:#1f1f1f;font-weight:400;left:813.00px;width:1200px;text-align:right;">0</div>
<div class="t num" style="top:739.32px;font-size:21px;line-height:21px;color:#1f1f1f;font-weight:400;left:1015.00px;width:1200px;text-align:right;">0</div>
<div class="t num" style="top:739.32px;font-size:21px;line-height:21px;color:#1f1f1f;font-weight:400;left:1217.00px;width:1200px;text-align:right;">0</div>
<div style="position:absolute;left:280px;top:776.85px;width:2252.5px;height:2px;background:#ebecef;"></div>
<div class="t td" style="top:793.32px;font-size:20px;line-height:20px;color:#1f1f1f;font-weight:400;letter-spacing:0.3px;left:293.50px;">Заказ <span style="color:#1a69cf">ЛТ2</span></div>
<div class="t td" style="top:793.32px;font-size:20px;line-height:20px;color:#1f1f1f;font-weight:400;letter-spacing:0.3px;left:545.50px;">9-0047</div>
<div class="t num" style="top:794.77px;font-size:21px;line-height:21px;color:#1f1f1f;font-weight:400;left:-280.00px;width:1200px;text-align:right;">450</div>
<div class="t num" style="top:794.77px;font-size:21px;line-height:21px;color:#1f1f1f;font-weight:400;left:-112.00px;width:1200px;text-align:right;">0</div>
<div class="t num" style="top:794.77px;font-size:21px;line-height:21px;color:#1f1f1f;font-weight:400;left:56.00px;width:1200px;text-align:right;">450</div>
<div class="t num" style="top:794.77px;font-size:21px;line-height:21px;color:#1f1f1f;font-weight:400;left:292.00px;width:1200px;text-align:right;">0</div>
<div class="t num" style="top:794.77px;font-size:21px;line-height:21px;color:#1f1f1f;font-weight:400;left:460.00px;width:1200px;text-align:right;">0</div>
<div class="t num" style="top:794.77px;font-size:21px;line-height:21px;color:#1f1f1f;font-weight:400;left:628.00px;width:1200px;text-align:right;">0</div>
<div class="t num" style="top:794.77px;font-size:21px;line-height:21px;color:#1f1f1f;font-weight:400;left:813.00px;width:1200px;text-align:right;">180</div>
<div class="t num" style="top:794.77px;font-size:21px;line-height:21px;color:#1f1f1f;font-weight:400;left:1015.00px;width:1200px;text-align:right;">0</div>
<div class="t num" style="top:794.77px;font-size:21px;line-height:21px;color:#1f8f3e;font-weight:400;left:1217.00px;width:1200px;text-align:right;">270</div>
<div style="position:absolute;left:280px;top:832.3px;width:2252.5px;height:2px;background:#ebecef;"></div>
<div class="t td" style="top:848.77px;font-size:20px;line-height:20px;color:#1f1f1f;font-weight:400;letter-spacing:0.3px;left:293.50px;">Возврат от клиента ...</div>
<div class="t num" style="top:850.22px;font-size:21px;line-height:21px;color:#1f1f1f;font-weight:400;left:-280.00px;width:1200px;text-align:right;">0</div>
<div class="t num" style="top:850.22px;font-size:21px;line-height:21px;color:#1f1f1f;font-weight:400;left:-112.00px;width:1200px;text-align:right;">-13 500</div>
<div class="t num" style="top:850.22px;font-size:21px;line-height:21px;color:#1f1f1f;font-weight:400;left:56.00px;width:1200px;text-align:right;">-13 500</div>
<div class="t num" style="top:850.22px;font-size:21px;line-height:21px;color:#1f1f1f;font-weight:400;left:292.00px;width:1200px;text-align:right;">0</div>
<div class="t num" style="top:850.22px;font-size:21px;line-height:21px;color:#1f1f1f;font-weight:400;left:460.00px;width:1200px;text-align:right;">-9 000</div>
<div class="t num" style="top:850.22px;font-size:21px;line-height:21px;color:#1f1f1f;font-weight:400;left:628.00px;width:1200px;text-align:right;">-9 000</div>
<div class="t num" style="top:850.22px;font-size:21px;line-height:21px;color:#1f1f1f;font-weight:400;left:813.00px;width:1200px;text-align:right;">0</div>
<div class="t num" style="top:850.22px;font-size:21px;line-height:21px;color:#1f1f1f;font-weight:400;left:1015.00px;width:1200px;text-align:right;">0</div>
<div class="t num" style="top:850.22px;font-size:21px;line-height:21px;color:#e03a3e;font-weight:400;left:1217.00px;width:1200px;text-align:right;">-4 500</div>
<div style="position:absolute;left:280px;top:887.75px;width:2252.5px;height:2px;background:#ebecef;"></div>
<div class="t td" style="top:904.22px;font-size:20px;line-height:20px;color:#1f1f1f;font-weight:400;letter-spacing:0.3px;left:293.50px;">Заказ <span style="color:#1a69cf">V1</span></div>
<div class="t td" style="top:904.22px;font-size:20px;line-height:20px;color:#1f1f1f;font-weight:400;letter-spacing:0.3px;left:545.50px;">Gainward 9-...</div>
<div class="t num" style="top:905.67px;font-size:21px;line-height:21px;color:#1f1f1f;font-weight:400;left:-280.00px;width:1200px;text-align:right;">0</div>
<div class="t num" style="top:905.67px;font-size:21px;line-height:21px;color:#1f1f1f;font-weight:400;left:-112.00px;width:1200px;text-align:right;">250</div>
<div class="t num" style="top:905.67px;font-size:21px;line-height:21px;color:#1f1f1f;font-weight:400;left:56.00px;width:1200px;text-align:right;">250</div>
<div class="t num" style="top:905.67px;font-size:21px;line-height:21px;color:#1f1f1f;font-weight:400;left:292.00px;width:1200px;text-align:right;">0</div>
<div class="t num" style="top:905.67px;font-size:21px;line-height:21px;color:#1f1f1f;font-weight:400;left:460.00px;width:1200px;text-align:right;">700</div>
<div class="t num" style="top:905.67px;font-size:21px;line-height:21px;color:#1f1f1f;font-weight:400;left:628.00px;width:1200px;text-align:right;">700</div>
<div class="t num" style="top:905.67px;font-size:21px;line-height:21px;color:#1f1f1f;font-weight:400;left:813.00px;width:1200px;text-align:right;">0</div>
<div class="t num" style="top:905.67px;font-size:21px;line-height:21px;color:#1f1f1f;font-weight:400;left:1015.00px;width:1200px;text-align:right;">0</div>
<div class="t num" style="top:905.67px;font-size:21px;line-height:21px;color:#e03a3e;font-weight:400;left:1217.00px;width:1200px;text-align:right;">-450</div>
<div style="position:absolute;left:280px;top:943.2px;width:2252.5px;height:2px;background:#ebecef;"></div>
<div class="t td" style="top:959.67px;font-size:20px;line-height:20px;color:#1f1f1f;font-weight:400;letter-spacing:0.3px;left:293.50px;">Заказ <span style="color:#1a69cf">A8219</span></div>
<div class="t td" style="top:959.67px;font-size:20px;line-height:20px;color:#1f1f1f;font-weight:400;letter-spacing:0.3px;left:545.50px;">Samsung QE...</div>
<div class="t num" style="top:961.12px;font-size:21px;line-height:21px;color:#1f1f1f;font-weight:400;left:-280.00px;width:1200px;text-align:right;">9 400</div>
<div class="t num" style="top:961.12px;font-size:21px;line-height:21px;color:#1f1f1f;font-weight:400;left:-112.00px;width:1200px;text-align:right;">0</div>
<div class="t num" style="top:961.12px;font-size:21px;line-height:21px;color:#1f1f1f;font-weight:400;left:56.00px;width:1200px;text-align:right;">9 400</div>
<div class="t num" style="top:961.12px;font-size:21px;line-height:21px;color:#1f1f1f;font-weight:400;left:292.00px;width:1200px;text-align:right;">0</div>
<div class="t num" style="top:961.12px;font-size:21px;line-height:21px;color:#1f1f1f;font-weight:400;left:460.00px;width:1200px;text-align:right;">0</div>
<div class="t num" style="top:961.12px;font-size:21px;line-height:21px;color:#1f1f1f;font-weight:400;left:628.00px;width:1200px;text-align:right;">0</div>
<div class="t num" style="top:961.12px;font-size:21px;line-height:21px;color:#1f1f1f;font-weight:400;left:813.00px;width:1200px;text-align:right;">480</div>
<div class="t num" style="top:961.12px;font-size:21px;line-height:21px;color:#1f1f1f;font-weight:400;left:1015.00px;width:1200px;text-align:right;">940</div>
<div class="t num" style="top:961.12px;font-size:21px;line-height:21px;color:#1f8f3e;font-weight:400;left:1217.00px;width:1200px;text-align:right;">7 980</div>
<div style="position:absolute;left:280px;top:998.6500000000001px;width:2252.5px;height:2px;background:#ebecef;"></div>
<div class="t td" style="top:1015.12px;font-size:20px;line-height:20px;color:#1f1f1f;font-weight:400;letter-spacing:0.3px;left:293.50px;">Заказ <span style="color:#1a69cf">A8107</span></div>
<div class="t td" style="top:1015.12px;font-size:20px;line-height:20px;color:#1f1f1f;font-weight:400;letter-spacing:0.3px;left:545.50px;">Apple iPhon...</div>
<div class="t num" style="top:1016.57px;font-size:21px;line-height:21px;color:#1f1f1f;font-weight:400;left:-280.00px;width:1200px;text-align:right;">175</div>
<div class="t num" style="top:1016.57px;font-size:21px;line-height:21px;color:#1f1f1f;font-weight:400;left:-112.00px;width:1200px;text-align:right;">0</div>
<div class="t num" style="top:1016.57px;font-size:21px;line-height:21px;color:#1f1f1f;font-weight:400;left:56.00px;width:1200px;text-align:right;">175</div>
<div class="t num" style="top:1016.57px;font-size:21px;line-height:21px;color:#1f1f1f;font-weight:400;left:292.00px;width:1200px;text-align:right;">150</div>
<div class="t num" style="top:1016.57px;font-size:21px;line-height:21px;color:#1f1f1f;font-weight:400;left:460.00px;width:1200px;text-align:right;">0</div>
<div class="t num" style="top:1016.57px;font-size:21px;line-height:21px;color:#1f1f1f;font-weight:400;left:628.00px;width:1200px;text-align:right;">150</div>
<div class="t num" style="top:1016.57px;font-size:21px;line-height:21px;color:#1f1f1f;font-weight:400;left:813.00px;width:1200px;text-align:right;">1,25</div>
<div class="t num" style="top:1016.57px;font-size:21px;line-height:21px;color:#1f1f1f;font-weight:400;left:1015.00px;width:1200px;text-align:right;">0</div>
<div class="t num" style="top:1016.57px;font-size:21px;line-height:21px;color:#1f8f3e;font-weight:400;left:1217.00px;width:1200px;text-align:right;">23,75</div>
<div style="position:absolute;left:280px;top:1054.1px;width:2252.5px;height:2px;background:#ebecef;"></div>
<div class="t td" style="top:1070.57px;font-size:20px;line-height:20px;color:#1f1f1f;font-weight:400;letter-spacing:0.3px;left:293.50px;">Заказ <span style="color:#1a69cf">A7725</span></div>
<div class="t td" style="top:1070.57px;font-size:20px;line-height:20px;color:#1f1f1f;font-weight:400;letter-spacing:0.3px;left:545.50px;">Apple MacBo...</div>
<div class="t num" style="top:1072.02px;font-size:21px;line-height:21px;color:#1f1f1f;font-weight:400;left:-280.00px;width:1200px;text-align:right;">900</div>
<div class="t num" style="top:1072.02px;font-size:21px;line-height:21px;color:#1f1f1f;font-weight:400;left:-112.00px;width:1200px;text-align:right;">0</div>
<div class="t num" style="top:1072.02px;font-size:21px;line-height:21px;color:#1f1f1f;font-weight:400;left:56.00px;width:1200px;text-align:right;">900</div>
<div class="t num" style="top:1072.02px;font-size:21px;line-height:21px;color:#1f1f1f;font-weight:400;left:292.00px;width:1200px;text-align:right;">150</div>
<div class="t num" style="top:1072.02px;font-size:21px;line-height:21px;color:#1f1f1f;font-weight:400;left:460.00px;width:1200px;text-align:right;">0</div>
<div class="t num" style="top:1072.02px;font-size:21px;line-height:21px;color:#1f1f1f;font-weight:400;left:628.00px;width:1200px;text-align:right;">150</div>
<div class="t num" style="top:1072.02px;font-size:21px;line-height:21px;color:#1f1f1f;font-weight:400;left:813.00px;width:1200px;text-align:right;">37,50</div>
<div class="t num" style="top:1072.02px;font-size:21px;line-height:21px;color:#1f1f1f;font-weight:400;left:1015.00px;width:1200px;text-align:right;">465</div>
<div class="t num" style="top:1072.02px;font-size:21px;line-height:21px;color:#1f8f3e;font-weight:400;left:1217.00px;width:1200px;text-align:right;">247,50</div>
<div style="position:absolute;left:280px;top:1109.55px;width:2252.5px;height:2px;background:#ebecef;"></div>
<div class="t td" style="top:1126.02px;font-size:20px;line-height:20px;color:#1f1f1f;font-weight:400;letter-spacing:0.3px;left:293.50px;">Заказ <span style="color:#1a69cf">A7625</span></div>
<div class="t td" style="top:1126.02px;font-size:20px;line-height:20px;color:#1f1f1f;font-weight:400;letter-spacing:0.3px;left:545.50px;">Like.Bike S20...</div>
<div class="t num" style="top:1127.47px;font-size:21px;line-height:21px;color:#1f1f1f;font-weight:400;left:-280.00px;width:1200px;text-align:right;">650</div>
<div class="t num" style="top:1127.47px;font-size:21px;line-height:21px;color:#1f1f1f;font-weight:400;left:-112.00px;width:1200px;text-align:right;">1 000</div>
<div class="t num" style="top:1127.47px;font-size:21px;line-height:21px;color:#1f1f1f;font-weight:400;left:56.00px;width:1200px;text-align:right;">1 650</div>
<div class="t num" style="top:1127.47px;font-size:21px;line-height:21px;color:#1f1f1f;font-weight:400;left:292.00px;width:1200px;text-align:right;">0</div>
<div class="t num" style="top:1127.47px;font-size:21px;line-height:21px;color:#1f1f1f;font-weight:400;left:460.00px;width:1200px;text-align:right;">1 000</div>
<div class="t num" style="top:1127.47px;font-size:21px;line-height:21px;color:#1f1f1f;font-weight:400;left:628.00px;width:1200px;text-align:right;">1 000</div>
<div class="t num" style="top:1127.47px;font-size:21px;line-height:21px;color:#1f1f1f;font-weight:400;left:813.00px;width:1200px;text-align:right;">32,50</div>
<div class="t num" style="top:1127.47px;font-size:21px;line-height:21px;color:#1f1f1f;font-weight:400;left:1015.00px;width:1200px;text-align:right;">130</div>
<div class="t num" style="top:1127.47px;font-size:21px;line-height:21px;color:#1f8f3e;font-weight:400;left:1217.00px;width:1200px;text-align:right;">379,17</div>
<div style="position:absolute;left:280px;top:1165.0px;width:2252.5px;height:2px;background:#ebecef;"></div>
<div class="t td" style="top:1181.47px;font-size:20px;line-height:20px;color:#1f1f1f;font-weight:400;letter-spacing:0.3px;left:293.50px;">Заказ <span style="color:#1a69cf">A7517</span></div>
<div class="t num" style="top:1182.92px;font-size:21px;line-height:21px;color:#1f1f1f;font-weight:400;left:-280.00px;width:1200px;text-align:right;">750</div>
<div class="t num" style="top:1182.92px;font-size:21px;line-height:21px;color:#1f1f1f;font-weight:400;left:-112.00px;width:1200px;text-align:right;">0</div>
<div class="t num" style="top:1182.92px;font-size:21px;line-height:21px;color:#1f1f1f;font-weight:400;left:56.00px;width:1200px;text-align:right;">750</div>
<div class="t num" style="top:1182.92px;font-size:21px;line-height:21px;color:#1f1f1f;font-weight:400;left:292.00px;width:1200px;text-align:right;">0</div>
<div class="t num" style="top:1182.92px;font-size:21px;line-height:21px;color:#1f1f1f;font-weight:400;left:460.00px;width:1200px;text-align:right;">0</div>
<div class="t num" style="top:1182.92px;font-size:21px;line-height:21px;color:#1f1f1f;font-weight:400;left:628.00px;width:1200px;text-align:right;">0</div>
<div class="t num" style="top:1182.92px;font-size:21px;line-height:21px;color:#1f1f1f;font-weight:400;left:813.00px;width:1200px;text-align:right;">0</div>
<div class="t num" style="top:1182.92px;font-size:21px;line-height:21px;color:#1f1f1f;font-weight:400;left:1015.00px;width:1200px;text-align:right;">450</div>
<div class="t num" style="top:1182.92px;font-size:21px;line-height:21px;color:#1f8f3e;font-weight:400;left:1217.00px;width:1200px;text-align:right;">300</div>
<div style="position:absolute;left:280px;top:1220.45px;width:2252.5px;height:2px;background:#ebecef;"></div>
<div class="t td" style="top:1236.92px;font-size:20px;line-height:20px;color:#1f1f1f;font-weight:400;letter-spacing:0.3px;left:293.50px;">Заказ <span style="color:#1a69cf">A7109</span></div>
<div class="t td" style="top:1236.92px;font-size:20px;line-height:20px;color:#1f1f1f;font-weight:400;letter-spacing:0.3px;left:545.50px;">Samsung 9-0...</div>
<div class="t num" style="top:1238.37px;font-size:21px;line-height:21px;color:#1f1f1f;font-weight:400;left:-280.00px;width:1200px;text-align:right;">300</div>
<div class="t num" style="top:1238.37px;font-size:21px;line-height:21px;color:#1f1f1f;font-weight:400;left:-112.00px;width:1200px;text-align:right;">0</div>
<div class="t num" style="top:1238.37px;font-size:21px;line-height:21px;color:#1f1f1f;font-weight:400;left:56.00px;width:1200px;text-align:right;">300</div>
<div class="t num" style="top:1238.37px;font-size:21px;line-height:21px;color:#1f1f1f;font-weight:400;left:292.00px;width:1200px;text-align:right;">50</div>
<div class="t num" style="top:1238.37px;font-size:21px;line-height:21px;color:#1f1f1f;font-weight:400;left:460.00px;width:1200px;text-align:right;">100</div>
<div class="t num" style="top:1238.37px;font-size:21px;line-height:21px;color:#1f1f1f;font-weight:400;left:628.00px;width:1200px;text-align:right;">150</div>
<div class="t num" style="top:1238.37px;font-size:21px;line-height:21px;color:#1f1f1f;font-weight:400;left:813.00px;width:1200px;text-align:right;">7,50</div>
<div class="t num" style="top:1238.37px;font-size:21px;line-height:21px;color:#1f1f1f;font-weight:400;left:1015.00px;width:1200px;text-align:right;">35</div>
<div class="t num" style="top:1238.37px;font-size:21px;line-height:21px;color:#1f8f3e;font-weight:400;left:1217.00px;width:1200px;text-align:right;">107,50</div>
<div style="position:absolute;left:280px;top:1275.9px;width:2252.5px;height:2px;background:#ebecef;"></div>
<div class="t td" style="top:1292.37px;font-size:20px;line-height:20px;color:#1f1f1f;font-weight:400;letter-spacing:0.3px;left:293.50px;">Заказ <span style="color:#1a69cf">A7009</span></div>
<div class="t td" style="top:1292.37px;font-size:20px;line-height:20px;color:#1f1f1f;font-weight:400;letter-spacing:0.3px;left:545.50px;">Lenovo 9-0151</div>
<div class="t num" style="top:1293.82px;font-size:21px;line-height:21px;color:#1f1f1f;font-weight:400;left:-280.00px;width:1200px;text-align:right;">300</div>
<div class="t num" style="top:1293.82px;font-size:21px;line-height:21px;color:#1f1f1f;font-weight:400;left:-112.00px;width:1200px;text-align:right;">0</div>
<div class="t num" style="top:1293.82px;font-size:21px;line-height:21px;color:#1f1f1f;font-weight:400;left:56.00px;width:1200px;text-align:right;">300</div>
<div class="t num" style="top:1293.82px;font-size:21px;line-height:21px;color:#1f1f1f;font-weight:400;left:292.00px;width:1200px;text-align:right;">50</div>
<div class="t num" style="top:1293.82px;font-size:21px;line-height:21px;color:#1f1f1f;font-weight:400;left:460.00px;width:1200px;text-align:right;">100</div>
<div class="t num" style="top:1293.82px;font-size:21px;line-height:21px;color:#1f1f1f;font-weight:400;left:628.00px;width:1200px;text-align:right;">150</div>
<div class="t num" style="top:1293.82px;font-size:21px;line-height:21px;color:#1f1f1f;font-weight:400;left:813.00px;width:1200px;text-align:right;">17,50</div>
<div class="t num" style="top:1293.82px;font-size:21px;line-height:21px;color:#1f1f1f;font-weight:400;left:1015.00px;width:1200px;text-align:right;">35</div>
<div class="t num" style="top:1293.82px;font-size:21px;line-height:21px;color:#1f8f3e;font-weight:400;left:1217.00px;width:1200px;text-align:right;">97,50</div>
<div style="position:absolute;left:280px;top:1331.35px;width:2252.5px;height:2px;background:#ebecef;"></div>
<div class="t td" style="top:1347.82px;font-size:20px;line-height:20px;color:#1f1f1f;font-weight:400;letter-spacing:0.3px;left:293.50px;">Заказ <span style="color:#1a69cf">A631</span></div>
<div class="t td" style="top:1347.82px;font-size:20px;line-height:20px;color:#1f1f1f;font-weight:400;letter-spacing:0.3px;left:545.50px;">LG 9-0077</div>
<div class="t num" style="top:1349.27px;font-size:21px;line-height:21px;color:#1f1f1f;font-weight:400;left:-280.00px;width:1200px;text-align:right;">8 200</div>
<div class="t num" style="top:1349.27px;font-size:21px;line-height:21px;color:#1f1f1f;font-weight:400;left:-112.00px;width:1200px;text-align:right;">539</div>
<div class="t num" style="top:1349.27px;font-size:21px;line-height:21px;color:#1f1f1f;font-weight:400;left:56.00px;width:1200px;text-align:right;">8 739</div>
<div class="t num" style="top:1349.27px;font-size:21px;line-height:21px;color:#1f1f1f;font-weight:400;left:292.00px;width:1200px;text-align:right;">0</div>
<div class="t num" style="top:1349.27px;font-size:21px;line-height:21px;color:#1f1f1f;font-weight:400;left:460.00px;width:1200px;text-align:right;">359</div>
<div class="t num" style="top:1349.27px;font-size:21px;line-height:21px;color:#1f1f1f;font-weight:400;left:628.00px;width:1200px;text-align:right;">359</div>
<div class="t num" style="top:1349.27px;font-size:21px;line-height:21px;color:#1f1f1f;font-weight:400;left:813.00px;width:1200px;text-align:right;">429</div>
<div class="t num" style="top:1349.27px;font-size:21px;line-height:21px;color:#1f1f1f;font-weight:400;left:1015.00px;width:1200px;text-align:right;">878</div>
<div class="t num" style="top:1349.27px;font-size:21px;line-height:21px;color:#1f8f3e;font-weight:400;left:1217.00px;width:1200px;text-align:right;">6 673</div>
<div style="position:absolute;left:260px;top:1366.7px;width:2300px;height:80px;background:#fdfdfe;"></div>
<div style="position:absolute;left:280px;top:1366.7px;width:2252.5px;height:2px;background:#e7e8eb;"></div>
<div style="position:absolute;left:701px;top:1382px;width:1731px;height:56px;background:#ededef;border-radius:7px;"></div>
<div class="t td" style="top:1402.07px;font-size:20px;line-height:20px;color:#1f1f1f;font-weight:400;letter-spacing:0.3px;left:293.50px;">Всего — <b>43</b></div>
<div class="t td" style="top:1402.07px;font-size:20px;line-height:20px;color:#1f1f1f;font-weight:400;letter-spacing:0.8px;left:-514.70px;width:1200px;text-align:right;">Итого:</div>
<div class="t numb" style="top:1400.07px;font-size:20px;line-height:20px;color:#1f1f1f;font-weight:700;letter-spacing:-0.03px;left:-280.03px;width:1200px;text-align:right;-webkit-text-stroke:0.45px #ededef;">48 638,68 €</div>
<div class="t numb" style="top:1400.07px;font-size:20px;line-height:20px;color:#1f1f1f;font-weight:700;letter-spacing:-0.03px;left:-112.03px;width:1200px;text-align:right;-webkit-text-stroke:0.45px #ededef;">4 154 €</div>
<div class="t numb" style="top:1400.07px;font-size:20px;line-height:20px;color:#1f1f1f;font-weight:700;letter-spacing:-0.03px;left:55.97px;width:1200px;text-align:right;-webkit-text-stroke:0.45px #ededef;">52 792,68 €</div>
<div class="t numb" style="top:1400.07px;font-size:20px;line-height:20px;color:#1f1f1f;font-weight:700;letter-spacing:-0.03px;left:291.97px;width:1200px;text-align:right;-webkit-text-stroke:0.45px #ededef;">420 €</div>
<div class="t numb" style="top:1400.07px;font-size:20px;line-height:20px;color:#1f1f1f;font-weight:700;letter-spacing:-0.03px;left:459.97px;width:1200px;text-align:right;-webkit-text-stroke:0.45px #ededef;">5 453,21 €</div>
<div class="t numb" style="top:1400.07px;font-size:20px;line-height:20px;color:#1f1f1f;font-weight:700;letter-spacing:-0.03px;left:627.97px;width:1200px;text-align:right;-webkit-text-stroke:0.45px #ededef;">5 873,21 €</div>
<div class="t numb" style="top:1400.07px;font-size:20px;line-height:20px;color:#1f1f1f;font-weight:700;letter-spacing:-0.03px;left:812.97px;width:1200px;text-align:right;-webkit-text-stroke:0.45px #ededef;">7 948,12 €</div>
<div class="t numb" style="top:1400.07px;font-size:20px;line-height:20px;color:#1f1f1f;font-weight:700;letter-spacing:-0.03px;left:1014.97px;width:1200px;text-align:right;-webkit-text-stroke:0.45px #ededef;">3 229 €</div>
<div class="t numb" style="top:1400.07px;font-size:20px;line-height:20px;color:#1f1f1f;font-weight:700;letter-spacing:-0.03px;left:1216.97px;width:1200px;text-align:right;-webkit-text-stroke:0.45px #e2e2e5;">32 004,73 €</div>
<div id="vig"></div>
</body></html>
